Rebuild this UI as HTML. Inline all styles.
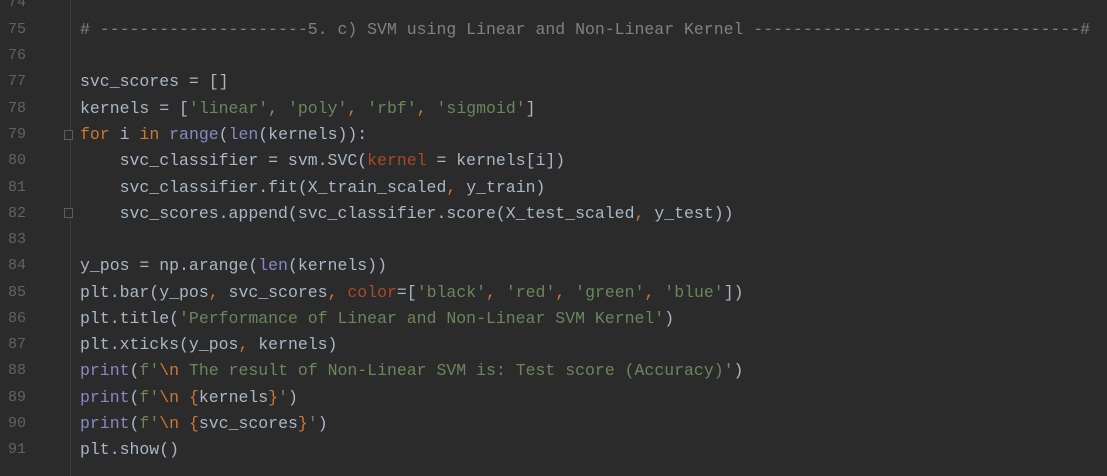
<!DOCTYPE html><html style="overflow:hidden;height:476px"><head><style>
body{margin:0;width:1107px;height:476px;background:#2b2b2b;overflow:hidden;position:relative;font-family:"Liberation Mono",monospace;font-size:16.5px}
.sep{position:absolute;left:70px;top:0;width:1px;height:476px;background:#3c3f41}
.l{position:absolute;left:0;height:26px;line-height:26px;white-space:pre;color:#a9b7c6}
.n{position:absolute;left:8px;width:24px;color:#606366;font-size:15px}
.c{position:absolute;left:80px}
.k{color:#cc7832}.s{color:#6a8759}.b{color:#8888c6}.cm{color:#808080}.p{color:#aa4926}
.fold{position:absolute;left:64px;width:9px;height:10px;border:1px solid #5a5d5f;box-sizing:border-box;background:#2b2b2b}
</style></head><body><div class="sep"></div>
<div class="l" style="top:-10px"><span class="n">74</span></div>
<div class="l" style="top:17px"><span class="n">75</span><span class="c cm"># ---------------------5. c) SVM using Linear and Non-Linear Kernel ---------------------------------#</span></div>
<div class="l" style="top:43px"><span class="n">76</span></div>
<div class="l" style="top:69px"><span class="n">77</span><span class="c">svc_scores = []</span></div>
<div class="l" style="top:96px"><span class="n">78</span><span class="c">kernels = [<span class="s">'linear'</span><span class="k">, </span><span class="s">'poly'</span><span class="k">, </span><span class="s">'rbf'</span><span class="k">, </span><span class="s">'sigmoid'</span>]</span></div>
<div class="l" style="top:122px"><span class="n">79</span><span class="c"><span class="k">for </span>i <span class="k">in </span><span class="b">range</span>(<span class="b">len</span>(kernels)):</span></div>
<div class="l" style="top:148px"><span class="n">80</span><span class="c">    svc_classifier = svm.SVC(<span class="p">kernel</span> = kernels[i])</span></div>
<div class="l" style="top:175px"><span class="n">81</span><span class="c">    svc_classifier.fit(X_train_scaled<span class="k">, </span>y_train)</span></div>
<div class="l" style="top:201px"><span class="n">82</span><span class="c">    svc_scores.append(svc_classifier.score(X_test_scaled<span class="k">, </span>y_test))</span></div>
<div class="l" style="top:227px"><span class="n">83</span></div>
<div class="l" style="top:253px"><span class="n">84</span><span class="c">y_pos = np.arange(<span class="b">len</span>(kernels))</span></div>
<div class="l" style="top:280px"><span class="n">85</span><span class="c">plt.bar(y_pos<span class="k">, </span>svc_scores<span class="k">, </span><span class="p">color</span>=[<span class="s">'black'</span><span class="k">, </span><span class="s">'red'</span><span class="k">, </span><span class="s">'green'</span><span class="k">, </span><span class="s">'blue'</span>])</span></div>
<div class="l" style="top:306px"><span class="n">86</span><span class="c">plt.title(<span class="s">'Performance of Linear and Non-Linear SVM Kernel'</span>)</span></div>
<div class="l" style="top:332px"><span class="n">87</span><span class="c">plt.xticks(y_pos<span class="k">, </span>kernels)</span></div>
<div class="l" style="top:358px"><span class="n">88</span><span class="c"><span class="b">print</span>(<span class="s">f'</span><span class="k">\n</span><span class="s"> The result of Non-Linear SVM is: Test score (Accuracy)'</span>)</span></div>
<div class="l" style="top:385px"><span class="n">89</span><span class="c"><span class="b">print</span>(<span class="s">f'</span><span class="k">\n</span> <span class="k">{</span>kernels<span class="k">}</span><span class="s">'</span>)</span></div>
<div class="l" style="top:411px"><span class="n">90</span><span class="c"><span class="b">print</span>(<span class="s">f'</span><span class="k">\n</span> <span class="k">{</span>svc_scores<span class="k">}</span><span class="s">'</span>)</span></div>
<div class="l" style="top:437px"><span class="n">91</span><span class="c">plt.show()</span></div>
<div class="l" style="top:463px;height:13px;overflow:hidden"><span class="n">92</span></div>
<div class="fold" style="top:130px"></div>
<div class="fold" style="top:208px"></div>
</body></html>
